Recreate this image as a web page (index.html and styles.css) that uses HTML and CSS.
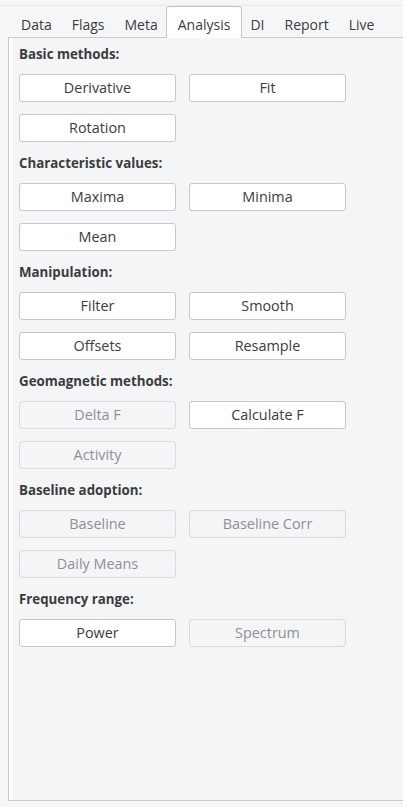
FILE: index.html
```html
<!DOCTYPE html>
<html>
<head>
<meta charset="utf-8">
<link rel="stylesheet" href="styles.css">
</head>
<body>
<div class="topline"></div>
<div class="tabs">
  <div class="tab">Data</div>
  <div class="tab">Flags</div>
  <div class="tab">Meta</div>
  <div class="tab active">Analysis</div>
  <div class="tab">DI</div>
  <div class="tab">Report</div>
  <div class="tab">Live</div>
</div>
<div class="panel">
  <div class="heading">Basic methods:</div>
  <div class="grid">
    <button class="btn">Derivative</button>
    <button class="btn">Fit</button>
    <button class="btn">Rotation</button>
  </div>
  <div class="heading">Characteristic values:</div>
  <div class="grid">
    <button class="btn">Maxima</button>
    <button class="btn">Minima</button>
    <button class="btn">Mean</button>
  </div>
  <div class="heading">Manipulation:</div>
  <div class="grid">
    <button class="btn">Filter</button>
    <button class="btn">Smooth</button>
    <button class="btn">Offsets</button>
    <button class="btn">Resample</button>
  </div>
  <div class="heading">Geomagnetic methods:</div>
  <div class="grid">
    <button class="btn disabled">Delta F</button>
    <button class="btn">Calculate F</button>
    <button class="btn disabled">Activity</button>
  </div>
  <div class="heading">Baseline adoption:</div>
  <div class="grid">
    <button class="btn disabled">Baseline</button>
    <button class="btn disabled">Baseline Corr</button>
    <button class="btn disabled">Daily Means</button>
  </div>
  <div class="heading">Frequency range:</div>
  <div class="grid">
    <button class="btn">Power</button>
    <button class="btn disabled">Spectrum</button>
  </div>
</div>
</body>
</html>
```

FILE: styles.css
```css
* { box-sizing: border-box; }
html, body {
  margin: 0;
  padding: 0;
  background: #f5f6f7;
  font-family: "Open Sans", "Noto Sans", sans-serif;
  font-size: 14px;
  color: #3c3c3c;
  overflow: hidden;
}
.topline {
  height: 6px;
  border-bottom: 1px solid #e7e8ea;
}
.tabs {
  display: flex;
  padding-left: 11px;
  height: 32px;
  margin-bottom: -1px;
  position: relative;
  z-index: 2;
}
.tab {
  padding: 4px 9px 0;
  border: 1px solid transparent;
  border-bottom: none;
  line-height: 28px;
  height: 32px;
}
.tab.active {
  background: #ffffff;
  border-color: #c4c6ca;
  border-radius: 4px 4px 0 0;
  padding: 4px 11px 0;
  margin: 0 -2px;
}
.panel {
  margin-left: 8px;
  width: calc(100% - 8px);
  height: 764px;
  border: 1px solid #c7c9cd;
  border-right: none;
  background: #f4f5f7;
  box-shadow: inset 4px 0 0 #fbfbfc;
  padding: 7px 0 0 10px;
  display: flex;
  flex-direction: column;
}
.heading {
  font-weight: bold;
  font-size: 13.3px;
  height: 18px;
  line-height: 18px;
  margin: 12px 0 11px;
}
.heading:first-child { margin-top: 0; }
.grid {
  display: grid;
  grid-template-columns: 157px 157px;
  column-gap: 13px;
  row-gap: 12px;
}
.btn {
  height: 28px;
  margin: 0;
  padding: 0 0 2px;
  background: #ffffff;
  border: 1px solid #c5c8cc;
  border-radius: 3px;
  font-family: inherit;
  font-size: 14.4px;
  color: #3c3c3c;
  text-align: center;
}
.btn.disabled {
  background: #f4f5f7;
  border-color: #d8dadd;
  color: #8d9093;
}
```
